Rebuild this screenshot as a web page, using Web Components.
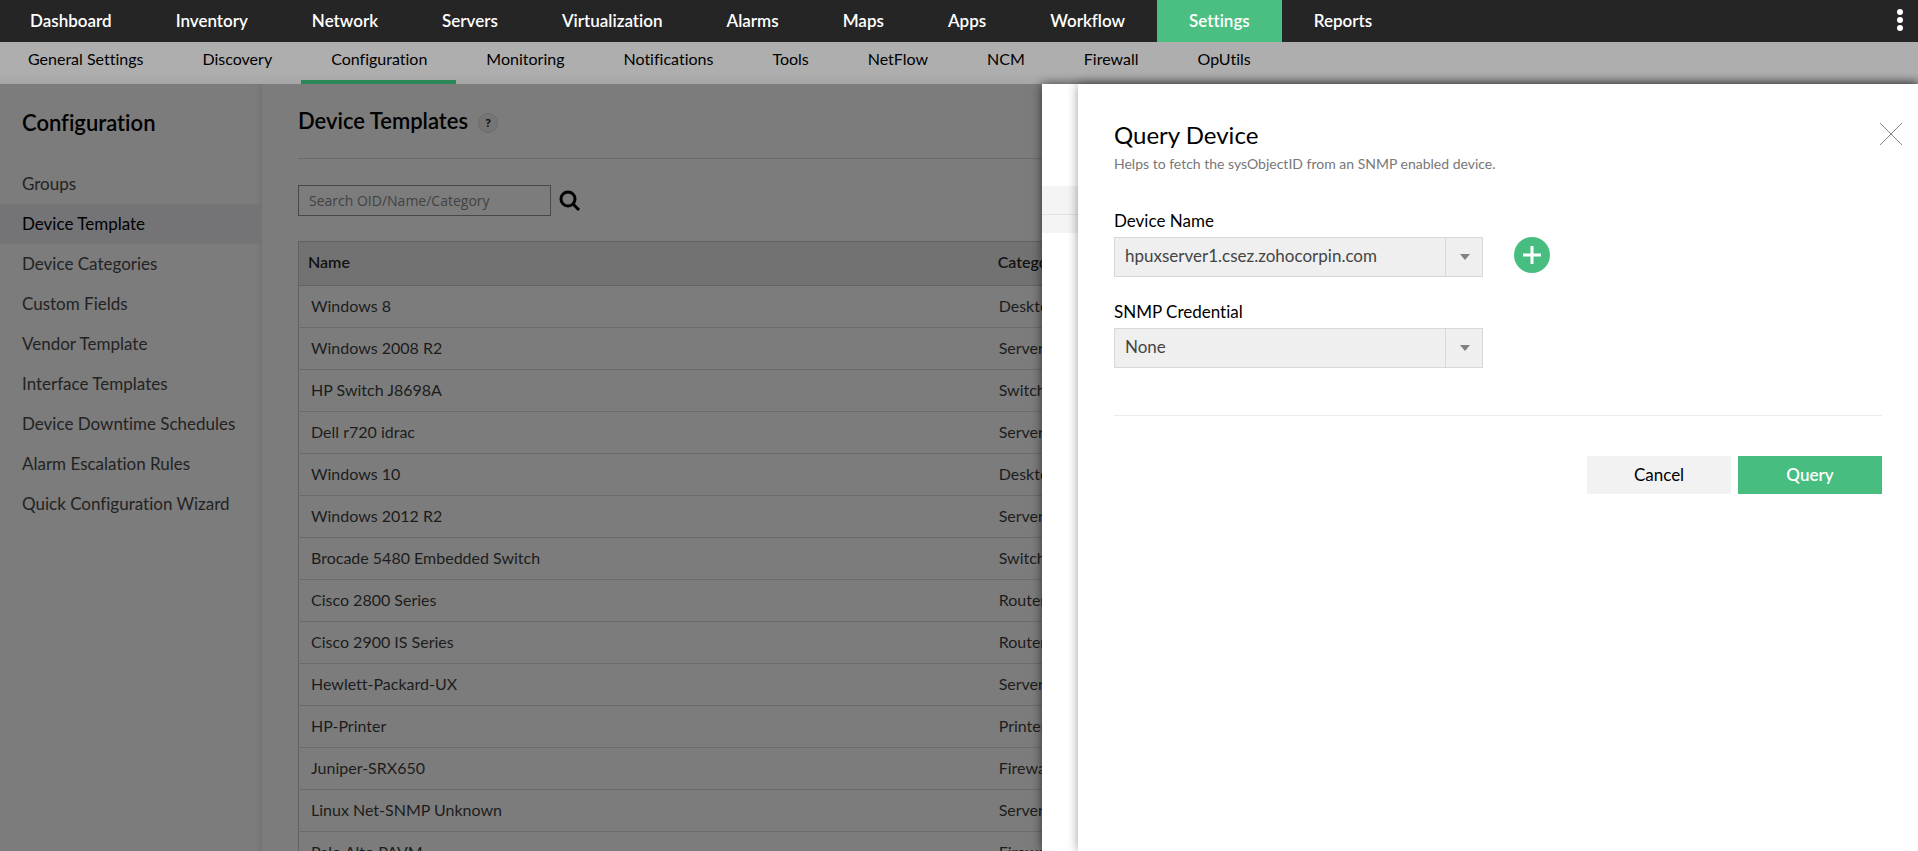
<!DOCTYPE html>
<html lang="en">
<head>
<meta charset="utf-8">
<title>Device Templates</title>
<style>
  :root {
    --green: #47be80;
    --dim: #7c7c7c;
    --dim-line: #6b6b6b;
    --ink: #000;
  }

  body {
    margin: 0;
    height: 100vh;
    overflow: hidden;
    font-family: Lato, "Liberation Sans", sans-serif;
    font-size: 16px;
    font-variant-ligatures: none;
    color: var(--ink);
    background-color: var(--dim);
  }
</style>
</head>
<body>
<app-shell>
  <top-nav slot="top">
    <top-item>Dashboard</top-item>
    <top-item>Inventory</top-item>
    <top-item>Network</top-item>
    <top-item>Servers</top-item>
    <top-item>Virtualization</top-item>
    <top-item>Alarms</top-item>
    <top-item>Maps</top-item>
    <top-item>Apps</top-item>
    <top-item>Workflow</top-item>
    <top-item active>Settings</top-item>
    <top-item>Reports</top-item>
  </top-nav>
  <sub-nav slot="top">
    <sub-item>General Settings</sub-item>
    <sub-item>Discovery</sub-item>
    <sub-item active>Configuration</sub-item>
    <sub-item>Monitoring</sub-item>
    <sub-item>Notifications</sub-item>
    <sub-item>Tools</sub-item>
    <sub-item>NetFlow</sub-item>
    <sub-item>NCM</sub-item>
    <sub-item>Firewall</sub-item>
    <sub-item>OpUtils</sub-item>
  </sub-nav>
  <side-menu slot="side">
    <span slot="title">Configuration</span>
    <side-item>Groups</side-item>
    <side-item active>Device Template</side-item>
    <side-item>Device Categories</side-item>
    <side-item>Custom Fields</side-item>
    <side-item>Vendor Template</side-item>
    <side-item>Interface Templates</side-item>
    <side-item>Device Downtime Schedules</side-item>
    <side-item>Alarm Escalation Rules</side-item>
    <side-item>Quick Configuration Wizard</side-item>
  </side-menu>
  <template-page>
    <span slot="title">Device Templates</span>
    <template-table></template-table>
  </template-page>
  <under-drawer slot="drawer">
    <query-drawer>
      <span slot="title">Query Device</span>
      <span slot="hint">Helps to fetch the sysObjectID from an SNMP enabled device.</span>
      <select-field label="Device Name" value="hpuxserver1.csez.zohocorpin.com">
        <add-button slot="after"></add-button>
      </select-field>
      <select-field label="SNMP Credential" value="None"></select-field>
      <action-button slot="actions">Cancel</action-button>
      <action-button slot="actions" primary>Query</action-button>
    </query-drawer>
  </under-drawer>
</app-shell>

<script>
function define(name, html, setup) {
  const template = document.createElement("template");
  template.innerHTML = html;

  customElements.define(
    name,
    class extends HTMLElement {
      constructor() {
        super();
        this._root = this.attachShadow({ mode: "open" });
        this._root.appendChild(template.content.cloneNode(true));
      }

      connectedCallback() {
        if (setup) setup(this, this._root);
      }
    }
  );
}

define("app-shell", `
  <style>
    :host {
      display: flex;
      flex-direction: column;
      height: 100%;
    }

    .body {
      position: relative;
      display: flex;
      flex: 1;
      min-height: 0;
    }

    main {
      flex: 1;
      min-width: 0;
      overflow: hidden;
    }
  </style>
  <slot name="top"></slot>
  <div class="body">
    <slot name="side"></slot>
    <main><slot></slot></main>
    <slot name="drawer"></slot>
  </div>
`);

define("top-nav", `
  <style>
    :host {
      display: flex;
      justify-content: space-between;
      height: 42px;
      flex: none;
      background-color: #252525;
    }

    nav {
      display: flex;
    }

    button {
      width: 36px;
      padding: 0 0 2px;
      border: 0;
      background: none;
      cursor: pointer;
    }

    svg {
      display: block;
      margin: 0 auto;
    }
  </style>
  <nav aria-label="Main"><slot></slot></nav>
  <button aria-label="More">
    <svg width="8" height="24" viewBox="0 0 8 24" fill="#fff"><circle cx="4" cy="4" r="3"/><circle cx="4" cy="12" r="3"/><circle cx="4" cy="20" r="3"/></svg>
  </button>
`);

define("top-item", `
  <style>
    :host {
      display: flex;
    }

    a {
      display: flex;
      align-items: center;
      padding: 0 32px 2px;
      font-size: 17px;
      font-weight: 600;
      color: #fff;
      text-decoration: none;
    }

    :host(:first-child) a {
      padding-left: 30px;
    }

    :host([active]) {
      background-color: #4bbe82;
    }
  </style>
  <a href="#"><slot></slot></a>
`);

define("sub-nav", `
  <style>
    :host {
      display: block;
      flex: none;
      height: 42px;
      background: linear-gradient(to bottom, #aeaeae 32px, #a5a5a5);
    }

    nav {
      display: flex;
      height: 100%;
    }
  </style>
  <nav aria-label="Settings"><slot></slot></nav>
`);

define("sub-item", `
  <style>
    :host {
      display: flex;
    }

    a {
      box-sizing: border-box;
      padding: 7px 29px 0 30px;
      font-size: 16px;
      line-height: 20px;
      color: #000;
      text-decoration: none;
      border-bottom: 4px solid transparent;
    }

    :host(:first-child) a {
      padding-left: 28px;
    }

    :host([active]) a {
      border-bottom-color: #2c8757;
    }
  </style>
  <a href="#"><slot></slot></a>
`);

define("side-menu", `
  <style>
    :host {
      display: block;
      flex: none;
      box-sizing: border-box;
      width: 262px;
      padding-top: 25px;
      box-shadow: inset -6px 0 6px -4px rgba(0, 0, 0, 0.08);
    }

    h2 {
      margin: 0 0 27px;
      padding: 0 22px;
      font-size: 22px;
      line-height: 28px;
      font-weight: 600;
    }
  </style>
  <h2><slot name="title"></slot></h2>
  <nav aria-label="Configuration"><slot></slot></nav>
`);

define("side-item", `
  <style>
    :host {
      display: block;
    }

    a {
      display: block;
      padding: 0 22px;
      font-size: 17px;
      line-height: 40px;
      color: #232323;
      text-decoration: none;
    }

    :host([active]) a {
      color: #000;
      background-color: #747477;
    }
  </style>
  <a href="#"><slot></slot></a>
`);

define("template-page", `
  <style>
    :host {
      display: block;
      padding: 22px 36px 0;
    }

    header {
      display: flex;
      align-items: center;
      gap: 10px;
      padding-bottom: 22px;
      border-bottom: 1px solid var(--dim-line);
    }

    h1 {
      margin: 0;
      font-size: 22px;
      line-height: 30px;
      font-weight: 600;
    }

    .help {
      width: 20px;
      height: 20px;
      margin-top: 4px;
      padding: 0;
      border: 1px solid #6d6d6d;
      border-radius: 50%;
      background-color: #757575;
      color: #111;
      font-family: "Open Sans", sans-serif;
      font-size: 11px;
      line-height: 16px;
      font-weight: 700;
    }

    form {
      display: flex;
      align-items: center;
      gap: 8px;
      margin: 26px 0 25px;
    }

    input {
      box-sizing: border-box;
      width: 253px;
      height: 31px;
      padding: 0 10px;
      border: 1px solid #484848;
      background: none;
      font-family: "Open Sans", sans-serif;
      font-size: 14px;
    }

    input::placeholder {
      color: #424242;
    }

    form button {
      padding: 0;
      border: 0;
      background: none;
    }

    svg {
      display: block;
    }
  </style>
  <header>
    <h1><slot name="title"></slot></h1>
    <button class="help">?</button>
  </header>
  <form>
    <input type="text" aria-label="Search" placeholder="Search OID/Name/Category">
    <button type="button" aria-label="Search">
      <svg width="22" height="22" viewBox="0 0 22 22" fill="none" stroke="#000"><circle cx="9" cy="9" r="7" stroke-width="3"/><path d="M14 14L20 20" stroke-width="3"/></svg>
    </button>
  </form>
  <slot></slot>
`);

const devices = [
  ["Windows 8", "Desktop"],
  ["Windows 2008 R2", "Server"],
  ["HP Switch J8698A", "Switch"],
  ["Dell r720 idrac", "Server"],
  ["Windows 10", "Desktop"],
  ["Windows 2012 R2", "Server"],
  ["Brocade 5480 Embedded Switch", "Switch"],
  ["Cisco 2800 Series", "Router"],
  ["Cisco 2900 IS Series", "Router"],
  ["Hewlett-Packard-UX", "Server"],
  ["HP-Printer", "Printer"],
  ["Juniper-SRX650", "Firewall"],
  ["Linux Net-SNMP Unknown", "Server"],
  ["Palo Alto PAVM", "Firewall"],
];

define("template-table", `
  <style>
    :host {
      display: block;
    }

    table {
      width: 100%;
      table-layout: fixed;
      border-collapse: collapse;
      border: 1px solid #626262;
    }

    th,
    td {
      box-sizing: border-box;
      height: 42px;
      padding: 0 12px 2px;
      text-align: left;
      font-size: 16px;
      border-bottom: 1px solid var(--dim-line);
    }

    td {
      color: #1c1c1c;
    }

    td + td {
      padding-left: 10px;
    }

    th {
      height: 44px;
      padding: 0 9px 4px;
      font-weight: 600;
      color: #111;
      background-color: #727272;
      border-bottom: 1px solid #626262;
    }

    th:first-child {
      width: 43.6%;
    }
  </style>
  <table>
    <thead><tr><th>Name</th><th>Category</th></tr></thead>
    <tbody></tbody>
  </table>
`, (el, root) => {
  const tbody = root.querySelector("tbody");
  tbody.innerHTML = devices
    .map(([name, category]) => `<tr><td>${name}</td><td>${category}</td></tr>`)
    .join("");
});

// drawer that stays open behind the query drawer, only its left edge shows
define("under-drawer", `
  <style>
    :host {
      position: absolute;
      top: 0;
      right: 0;
      bottom: 0;
      display: flex;
      width: 876px;
      max-width: 100%;
      background-color: #fff;
      box-shadow: 0 0 10px rgba(0, 0, 0, 0.6);
    }

    .edge {
      width: 36px;
      padding-top: 102px;
    }

    .head,
    .row {
      height: 28px;
      background-color: #f4f4f4;
      border-bottom: 1px solid #e2e2e2;
    }

    .row {
      height: 18px;
      border-bottom: 0;
    }

    ::slotted(*) {
      flex: 1;
    }
  </style>
  <div class="edge">
    <div class="head"></div>
    <div class="row"></div>
  </div>
  <slot></slot>
`);

define("query-drawer", `
  <style>
    :host {
      display: block;
      padding: 35px 36px 0;
      background-color: #fff;
      box-shadow: 0 0 10px rgba(0, 0, 0, 0.4);
    }

    header {
      display: flex;
      justify-content: space-between;
      align-items: flex-start;
      margin-bottom: 34px;
    }

    h2 {
      margin: 0;
      font-size: 24px;
      line-height: 32px;
      font-weight: 400;
    }

    p {
      margin: 0;
      padding-top: 3px;
      font-size: 14px;
      line-height: 20px;
      color: #777;
    }

    .close {
      margin: 3px -21px 0 0;
      padding: 0;
      border: 0;
      background: none;
      cursor: pointer;
    }

    svg {
      display: block;
    }

    .fields {
      display: flex;
      flex-direction: column;
      gap: 22px;
      padding-bottom: 47px;
      border-bottom: 1px solid #ededed;
    }

    footer {
      display: flex;
      justify-content: flex-end;
      gap: 7px;
      margin-top: 40px;
    }
  </style>
  <header>
    <div>
      <h2><slot name="title"></slot></h2>
      <p><slot name="hint"></slot></p>
    </div>
    <button class="close" aria-label="Close">
      <svg width="24" height="24" viewBox="0 0 24 24" fill="none" stroke="#85888a" stroke-width="1"><path d="M1 1L23 23M23 1L1 23"/></svg>
    </button>
  </header>
  <div class="fields"><slot></slot></div>
  <footer><slot name="actions"></slot></footer>
`);

define("select-field", `
  <style>
    :host {
      display: block;
    }

    label {
      display: block;
      margin-bottom: 4px;
      font-size: 17px;
      line-height: 25px;
    }

    .line {
      display: flex;
      align-items: flex-start;
      gap: 31px;
    }

    .box {
      display: grid;
      grid-template-columns: 1fr 38px;
      width: 369px;
      height: 40px;
    }

    select {
      grid-area: 1 / 1 / 2 / 3;
      box-sizing: border-box;
      width: 100%;
      height: 100%;
      padding: 0 48px 4px 10px;
      appearance: none;
      border: 1px solid #d8d8d8;
      border-radius: 0;
      background-color: #efefef;
      color: #444;
      font: inherit;
      font-size: 17px;
    }

    .arrow {
      grid-area: 1 / 2;
      display: flex;
      align-items: center;
      justify-content: center;
      margin: 1px 0;
      border-left: 1px solid #d8d8d8;
      pointer-events: none;
    }
  </style>
  <label for="field"></label>
  <div class="line">
    <div class="box">
      <select id="field"><option></option></select>
      <span class="arrow">
        <svg width="10" height="6" viewBox="0 0 10 6" fill="#808080"><path d="M0 0h10L5 6z"/></svg>
      </span>
    </div>
    <slot name="after"></slot>
  </div>
`, (el, root) => {
  root.querySelector("label").textContent = el.getAttribute("label");
  root.querySelector("option").textContent = el.getAttribute("value");
});

define("add-button", `
  <style>
    :host {
      display: block;
    }

    button {
      display: block;
      padding: 0;
      border: 0;
      background: none;
      cursor: pointer;
    }

    svg {
      display: block;
    }
  </style>
  <button aria-label="Add device">
    <svg width="36" height="36" viewBox="0 0 36 36"><circle cx="18" cy="18" r="18" fill="#47be80"/><path d="M18 9v18M9 18h18" stroke="#fff" stroke-width="3"/></svg>
  </button>
`);

define("action-button", `
  <style>
    :host {
      display: block;
    }

    button {
      width: 144px;
      height: 38px;
      padding: 0 0 2px;
      border: 0;
      background-color: #f2f2f2;
      color: #000;
      font: inherit;
      font-size: 17px;
      cursor: pointer;
    }

    :host([primary]) button {
      background-color: var(--green);
      color: #fff;
      font-weight: 600;
    }
  </style>
  <button><slot></slot></button>
`);
</script>
</body>
</html>
